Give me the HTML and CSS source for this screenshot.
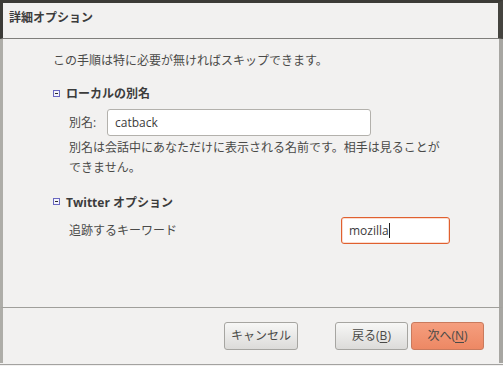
FILE: index.html
```html
<!DOCTYPE html>
<html lang="ja">
<head>
<meta charset="utf-8">
<title>詳細オプション</title>
<link rel="stylesheet" href="styles.css">
</head>
<body>
<div class="titlebar"><span class="title">詳細オプション</span></div>
<div class="content">
  <p class="intro">この手順は特に必要が無ければスキップできます。</p>
  <div class="section">
    <div class="section-head"><span class="exp-icon"></span><span>ローカルの別名</span></div>
    <div class="section-body">
      <div class="row row-first">
        <span class="label label-alias">別名:</span>
        <div class="entry entry-alias">catback</div>
      </div>
      <p class="desc">別名は会話中にあなただけに表示される名前です。相手は見ることが<br>できません。</p>
    </div>
  </div>
  <div class="section section-second">
    <div class="section-head"><span class="exp-icon"></span><span>Twitter オプション</span></div>
    <div class="section-body">
      <div class="row row-second">
        <span class="label label-keyword">追跡するキーワード</span>
        <div class="entry entry-focus">mozilla<span class="caret"></span></div>
      </div>
    </div>
  </div>
</div>
<div class="actions">
  <button class="btn btn-cancel">キャンセル</button>
  <button class="btn btn-back">戻る(<u>B</u>)</button>
  <button class="btn btn-next">次へ(<u>N</u>)</button>
</div>
<div class="footer"></div>
</body>
</html>
```
FILE: styles.css
```css
html, body {
  margin: 0;
  padding: 0;
}
body {
  width: 503px;
  height: 366px;
  overflow: hidden;
  background: #f2f1f0;
  font-family: "Open Sans", "Noto Sans CJK JP", sans-serif;
  font-size: 12px;
  color: #4a4a48;
}
.titlebar {
  box-sizing: border-box;
  height: 39px;
  border-top: 3px solid #3c3b37;
  border-left: 3px solid #3c3b37;
  border-right: 5px solid #45443f;
  border-bottom: 1px solid #7f7e7b;
  padding: 6px 0 0 6px;
  line-height: 17px;
}
.title {
  font-weight: bold;
  color: #3c3c3c;
}
.content {
  box-sizing: border-box;
  height: 268px;
  border-left: 3px solid #aeada8;
  border-right: 4px solid #a7a6a2;
  padding: 12.5px 0 0 50px;
}
.intro {
  margin: 0;
  line-height: 17px;
}
.section-head {
  display: flex;
  align-items: center;
  height: 17px;
  margin-top: 16px;
  font-weight: bold;
  color: #3c3c3c;
}
.section-second .section-head {
  margin-top: 15.5px;
}
.exp-icon {
  position: relative;
  box-sizing: border-box;
  width: 7px;
  height: 7px;
  border: 1px solid #6a68c0;
  background: #f4f4fb;
  margin-right: 6px;
}
.exp-icon::after {
  content: "";
  position: absolute;
  left: 1px;
  top: 2px;
  width: 3px;
  height: 1px;
  background: #2a2a2a;
}
.section-body {
  padding-left: 16px;
}
.row {
  display: flex;
  align-items: center;
}
.row-first {
  margin-top: 7.5px;
}
.row-second {
  margin-top: 7px;
}
.label {
  line-height: 17px;
}
.label-alias {
  width: 38px;
}
.label-keyword {
  width: 272px;
}
.entry {
  box-sizing: border-box;
  height: 27px;
  border: 1px solid #b3b1ac;
  border-radius: 3px;
  background: #ffffff;
  padding-left: 7px;
  line-height: 25px;
  color: #3c3c3c;
}
.entry-alias {
  width: 264px;
}
.entry-focus {
  width: 109px;
  border-color: #e0602f;
  box-shadow: inset 0 0 0 1px rgba(240, 140, 100, 0.3);
}
.caret {
  display: inline-block;
  width: 1px;
  height: 15px;
  background: #222;
  vertical-align: -3px;
}
.desc {
  margin: 1.5px 0 0;
  line-height: 20px;
}
.actions {
  box-sizing: border-box;
  height: 56px;
  border-top: 1px solid #a09f9b;
  border-left: 3px solid #aeada8;
  border-right: 4px solid #a7a6a2;
  display: flex;
  justify-content: flex-end;
  align-items: flex-start;
  padding: 14px 15px 0 0;
}
.btn {
  box-sizing: border-box;
  height: 28px;
  margin: 0;
  padding: 0;
  border: 1px solid #a6a5a1;
  border-radius: 3px;
  background: linear-gradient(#f7f7f6, #dcdbd9);
  font-family: inherit;
  font-size: 12px;
  color: #4a4a48;
  line-height: 26px;
}
.btn u {
  text-underline-offset: 2px;
}
.btn-cancel {
  width: 74px;
  margin-right: 37px;
}
.btn-back {
  width: 73px;
  margin-right: 3px;
}
.btn-next {
  width: 73px;
  border-color: #c97a5d;
  background: linear-gradient(#f59e7e, #ed8864);
}
.footer {
  margin-top: 1px;
  height: 1px;
  background: #a3a2a0;
}
```
